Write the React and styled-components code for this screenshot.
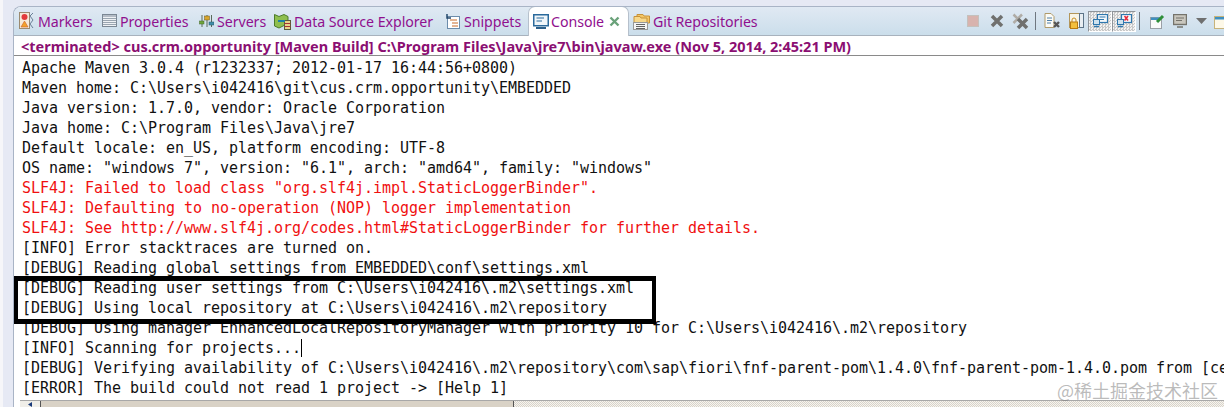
import React from 'react';
import styled, { createGlobalStyle } from 'styled-components';

const GlobalStyle = createGlobalStyle`
    html, body {
        margin: 0;
        padding: 0;
        background: #e6e9f4;
    }
`;

const Page = styled.div`
    width: 1224px;
    height: 407px;
    overflow: hidden;
    position: relative;
    padding: 6px 0 0 10px;
    box-sizing: border-box;
    background: #e6e9f4;
    border-left: 3px solid #f6f6f9;
`;

const Frame = styled.div`
    height: 401px;
    display: flex;
    flex-direction: column;
    background: #fff;
    border-top: 1px solid #a9b4c6;
    border-left: 1px solid #a9b4c6;
    border-top-left-radius: 8px;
    box-sizing: border-box;
    overflow: hidden;
`;

const TabBar = styled.div`
    height: 28px;
    flex-shrink: 0;
    display: flex;
    align-items: stretch;
    padding-left: 4px;
    background: linear-gradient(#e0e9f3, #cbdeeb);
    border-bottom: 1px solid #a8b2bd;
`;

const Tab = styled.div`
    display: flex;
    align-items: center;
    gap: 3px;
    width: ${props => props.w}px;
    padding-left: ${props => props.pad || 1}px;
    flex-shrink: 0;
    box-sizing: border-box;
    font: 14.2px "Noto Sans", sans-serif;
    color: #90108e;
    white-space: nowrap;
    letter-spacing: -0.05px;
    ${props => props.active && `
        background: #fff;
        border: 1px solid #b6c0cc;
        border-bottom: none;
        border-radius: 7px 7px 0 0;
        margin-top: -1px;
        margin-bottom: -1px;
        padding-left: 4px;
        gap: 2px;
        z-index: 1;
    `}
`;

const CloseBox = styled.svg`
    margin-left: 3px;
`;

const Toolbar = styled.div`
    margin-left: auto;
    display: flex;
    align-items: center;
    width: 263px;
    overflow: hidden;
    flex-shrink: 0;
`;

const ToolIcon = styled.span`
    display: flex;
    width: ${props => props.w || 24}px;
    height: 21px;
    align-items: center;
    justify-content: center;
    flex-shrink: 0;
    box-sizing: border-box;
    ${props => props.pressed && `
        background: repeating-conic-gradient(#c8c8c8 0 25%, #f2f2f2 0 50%) 0 0 / 3px 3px;
        border: 1px solid #fff;
        border-top-color: #8f949a;
        border-left-color: #8f949a;
    `}
`;

const Separator = styled.span`
    width: 1px;
    height: 18px;
    background: #6f7780;
    flex-shrink: 0;
    margin: 0 3px;
`;

const ConsoleTitle = styled.div`
    height: 20px;
    flex-shrink: 0;
    box-sizing: border-box;
    padding-left: 7px;
    border-bottom: 1px solid #8a8a8a;
    font: bold 14.5px/20px "Noto Sans", sans-serif;
    color: #8b0f72;
    white-space: nowrap;
`;

const ConsoleBody = styled.div`
    flex: 1;
    min-height: 0;
    padding: 2px 0 0 8px;
    overflow: hidden;
    position: relative;
`;

const Line = styled.div`
    height: 20px;
    font: 15px/20px "DejaVu Sans Mono", monospace;
    letter-spacing: -0.03px;
    color: ${props => (props.err ? '#f01010' : '#111')};
    white-space: pre;
`;

const Caret = styled.span`
    display: inline-block;
    width: 1px;
    height: 18px;
    background: #000;
    vertical-align: -4px;
`;

const Highlight = styled.div`
    position: absolute;
    left: 0;
    top: 220px;
    width: 642px;
    height: 48px;
    border: solid #000;
    border-width: 5px 4px;
    box-sizing: border-box;
`;

const ScrollBar = styled.div`
    height: 7px;
    flex-shrink: 0;
    margin-left: 6px;
    display: flex;
    border-top: 1px solid #a8a8a8;
    box-sizing: border-box;
    background: repeating-conic-gradient(#d9d4ca 0 25%, #f6f4f0 0 50%) 0 0 / 2px 2px;
`;

const ScrollButton = styled.div`
    width: 20px;
    background: #f0eee8;
    border-right: 1px solid #555;
    display: flex;
    justify-content: center;
`;

const ScrollThumb = styled.div`
    width: 472px;
    background: #d9d2c6;
    border-right: 1px solid #555;
`;

const Watermark = styled.div`
    position: absolute;
    right: 6px;
    bottom: 6px;
    font: 18px/22px "Noto Sans CJK SC", sans-serif;
    color: rgba(120, 120, 120, 0.5);
`;

const MarkersIcon = () => (
    <svg width="16" height="18" viewBox="0 0 16 18">
        <rect x="0.5" y="0.5" width="10" height="16" fill="#f6ead8" stroke="#9a8a70" />
        <circle cx="5.5" cy="5" r="3" fill="#e23b3b" />
        <path d="M2 15 L5.5 9 L9 15 Z" fill="#f3a22b" stroke="#c9602b" strokeWidth="0.6" />
        <path d="M14 1 L11 4 L14 8 L11 12 L14 16" fill="none" stroke="#6a7f96" />
    </svg>
);

const PropertiesIcon = () => (
    <svg width="15" height="14" viewBox="0 0 15 14">
        <rect x="0.5" y="0.5" width="14" height="12" fill="#eef1f4" stroke="#7b8794" />
        <rect x="1" y="1" width="13" height="2" fill="#b4bcc6" />
        <path d="M1 4.5H14M1 6.5H14M1 8.5H14M1 10.5H14" stroke="#9aa5b0" />
    </svg>
);

const ServersIcon = () => (
    <svg width="15" height="16" viewBox="0 0 15 16">
        <path d="M3 2V14M8 2V14M12.5 2V14" stroke="#5a6a5a" />
        <rect x="0.5" y="8" width="4.5" height="3" fill="#6fa53a" stroke="#45682a" strokeWidth="0.5" />
        <rect x="5.5" y="3" width="5" height="4" fill="#d8a62e" stroke="#6a5a20" strokeWidth="0.5" />
        <rect x="10" y="9" width="5" height="3" fill="#3f8fa8" stroke="#2a5a6a" strokeWidth="0.5" />
    </svg>
);

const DataSourceIcon = () => (
    <svg width="17" height="17" viewBox="0 0 17 17">
        <path d="M0.5 1.5L5 3.5L10 1.5L14 3.5V14L10 12.5L5 15L0.5 13Z" fill="#8fbf4f" stroke="#4c7a2b" />
        <rect x="10.5" y="7.5" width="6" height="9" fill="#e8d48a" stroke="#5b5b3a" />
        <path d="M10.5 10.5H16.5M10.5 13.5H16.5" stroke="#a33" />
        <path d="M4 8H11" stroke="#1f7fa8" strokeWidth="2" />
    </svg>
);

const SnippetsIcon = () => (
    <svg width="15" height="17" viewBox="0 0 15 17">
        <rect x="1.5" y="3.5" width="12" height="12" fill="#fff" stroke="#6c8cab" />
        <path d="M4 7H11M6 10H12M6 13H12" stroke="#c86a2a" />
        <path d="M1 1V5H5" fill="none" stroke="#23476b" strokeWidth="1.5" />
    </svg>
);

const ConsoleIcon = () => (
    <svg width="16" height="16" viewBox="0 0 16 16">
        <rect x="0.75" y="0.75" width="14.5" height="11" fill="#f0f6fa" stroke="#2b6a9c" strokeWidth="1.5" />
        <path d="M3.5 4H11M3.5 7H9" stroke="#2b6a9c" />
        <path d="M3 14H13" stroke="#2b5f8a" strokeWidth="2" />
    </svg>
);

const GitIcon = () => (
    <svg width="17" height="17" viewBox="0 0 17 17">
        <path d="M4 5V1.5H10L11 3H16.5V10H4Z" fill="#f4c768" stroke="#c7923a" />
        <path d="M1 8V3.5H7L8 5H14V10H1Z" fill="#f7d88b" stroke="#c7923a" />
        <rect x="0.5" y="9.5" width="14" height="7" fill="#f5f5f5" stroke="#999" />
        <path d="M3 11.5H12M3 13.5H12M3 15.5H12" stroke="#555" strokeWidth="0.9" />
    </svg>
);

const StopIcon = () => (
    <svg width="12" height="12" viewBox="0 0 12 12">
        <rect x="0.5" y="0.5" width="11" height="11" fill="#d8b3ae" stroke="#c4c0bc" />
    </svg>
);

const RemoveIcon = () => (
    <svg width="14" height="14" viewBox="0 0 14 14">
        <path d="M2 2L12 12M12 2L2 12" stroke="#70706e" strokeWidth="3.5" />
    </svg>
);

const RemoveAllIcon = () => (
    <svg width="17" height="17" viewBox="0 0 17 17">
        <path d="M1.5 1.5L10 10M10 1.5L1.5 10" stroke="#b0aca6" strokeWidth="2.5" />
        <path d="M6 6L15 15M15 6L6 15" stroke="#70706e" strokeWidth="3.5" />
    </svg>
);

const ClearIcon = () => (
    <svg width="16" height="16" viewBox="0 0 16 16">
        <path d="M1 0.5H7L10 3.5V14.5H1Z" fill="#fbfbf6" stroke="#b09a6a" />
        <path d="M3 5H8M3 7.5H8M3 10H7" stroke="#4f7ea8" />
        <path d="M10 9L15 14M15 9L10 14" stroke="#555" strokeWidth="2.4" />
    </svg>
);

const LockIcon = () => (
    <svg width="15" height="16" viewBox="0 0 15 16">
        <rect x="0.5" y="0.5" width="10" height="14" fill="#f8f4e6" stroke="#b3965a" />
        <rect x="10.5" y="0.5" width="4" height="14" fill="#e9eef2" stroke="#5d7488" />
        <path d="M3 9V7A2 2 0 0 1 7 7V9" fill="none" stroke="#c78f22" />
        <rect x="1.5" y="9" width="7" height="6.5" fill="#f2bf3e" stroke="#b97a12" />
    </svg>
);

const PinIcon = () => (
    <svg width="15" height="14" viewBox="0 0 15 14">
        <rect x="4.5" y="0.5" width="10" height="8" fill="#f4f8fb" stroke="#2f77ad" strokeWidth="1.2" />
        <path d="M6.5 3H12.5M6.5 5.5H11" stroke="#2f77ad" />
        <rect x="0.5" y="5.5" width="6" height="5" fill="#cfe2ee" stroke="#2f77ad" />
        <path d="M1 12.5H6" stroke="#2f77ad" strokeWidth="1.5" />
    </svg>
);

const ErrorConsoleIcon = () => (
    <svg width="15" height="14" viewBox="0 0 15 14">
        <rect x="4.5" y="0.5" width="10" height="8" fill="#f4f8fb" stroke="#2f77ad" strokeWidth="1.2" />
        <path d="M7.5 2L11 6.5M11 2L7.5 6.5" stroke="#ea2a3a" strokeWidth="1.6" />
        <rect x="0.5" y="5.5" width="6" height="5" fill="#cfe2ee" stroke="#2f77ad" />
        <path d="M1 12.5H6" stroke="#2f77ad" strokeWidth="1.5" />
    </svg>
);

const NewPinIcon = () => (
    <svg width="15" height="15" viewBox="0 0 15 15">
        <rect x="0.5" y="3.5" width="11" height="11" fill="#fafafa" stroke="#9aa0a6" />
        <rect x="1" y="3.5" width="10" height="2.5" fill="#3f8fc0" />
        <path d="M7 8L13 2" stroke="#2f8f3a" strokeWidth="3" />
    </svg>
);

const DisplayIcon = () => (
    <svg width="14" height="14" viewBox="0 0 14 14">
        <rect x="0.5" y="0.5" width="13" height="10" fill="#c9c6bd" stroke="#75736c" strokeWidth="1.4" />
        <path d="M3 4H11M3 6.5H9" stroke="#75736c" />
        <path d="M4 13H10" stroke="#75736c" strokeWidth="1.6" />
    </svg>
);

const ArrowIcon = () => (
    <svg width="11" height="6" viewBox="0 0 11 6">
        <path d="M0 0H11L5.5 6Z" fill="#6f6f6f" />
    </svg>
);

const NewConsoleIcon = () => (
    <svg width="15" height="15" viewBox="0 0 15 15">
        <rect x="0.5" y="2.5" width="13" height="12" fill="#fdf8e8" stroke="#c8b37a" />
        <rect x="1" y="3" width="12" height="2.5" fill="#3f8fc0" />
    </svg>
);

const lines = [
    { text: 'Apache Maven 3.0.4 (r1232337; 2012-01-17 16:44:56+0800)' },
    { text: 'Maven home: C:\\Users\\i042416\\git\\cus.crm.opportunity\\EMBEDDED' },
    { text: 'Java version: 1.7.0, vendor: Oracle Corporation' },
    { text: 'Java home: C:\\Program Files\\Java\\jre7' },
    { text: 'Default locale: en_US, platform encoding: UTF-8' },
    { text: 'OS name: "windows 7", version: "6.1", arch: "amd64", family: "windows"' },
    { text: 'SLF4J: Failed to load class "org.slf4j.impl.StaticLoggerBinder".', err: true },
    { text: 'SLF4J: Defaulting to no-operation (NOP) logger implementation', err: true },
    { text: 'SLF4J: See http://www.slf4j.org/codes.html#StaticLoggerBinder for further details.', err: true },
    { text: '[INFO] Error stacktraces are turned on.' },
    { text: '[DEBUG] Reading global settings from EMBEDDED\\conf\\settings.xml' },
    { text: '[DEBUG] Reading user settings from C:\\Users\\i042416\\.m2\\settings.xml' },
    { text: '[DEBUG] Using local repository at C:\\Users\\i042416\\.m2\\repository' },
    { text: '[DEBUG] Using manager EnhancedLocalRepositoryManager with priority 10 for C:\\Users\\i042416\\.m2\\repository' },
    { text: '[INFO] Scanning for projects...', caret: true },
    { text: '[DEBUG] Verifying availability of C:\\Users\\i042416\\.m2\\repository\\com\\sap\\fiori\\fnf-parent-pom\\1.4.0\\fnf-parent-pom-1.4.0.pom from [ce' },
    { text: '[ERROR] The build could not read 1 project -> [Help 1]' },
];

const App = () => {
    return (
        <>
            <GlobalStyle />
            <Page>
                <Frame>
                    <TabBar>
                        <Tab w={83}><MarkersIcon />Markers</Tab>
                        <Tab w={97}><PropertiesIcon />Properties</Tab>
                        <Tab w={75}><ServersIcon />Servers</Tab>
                        <Tab w={172}><DataSourceIcon />Data Source Explorer</Tab>
                        <Tab w={83}><SnippetsIcon />Snippets</Tab>
                        <Tab active w={101}>
                            <ConsoleIcon />Console
                            <CloseBox width="11" height="11" viewBox="0 0 11 11">
                                <path d="M1.5 1.5L9.5 9.5M9.5 1.5L1.5 9.5" stroke="#6aa27a" strokeWidth="2.4" />
                            </CloseBox>
                        </Tab>
                        <Tab w={130} pad={4}><GitIcon />Git Repositories</Tab>
                        <Toolbar>
                            <ToolIcon w={23}><StopIcon /></ToolIcon>
                            <ToolIcon w={25}><RemoveIcon /></ToolIcon>
                            <ToolIcon w={23}><RemoveAllIcon /></ToolIcon>
                            <Separator />
                            <ToolIcon w={26}><ClearIcon /></ToolIcon>
                            <ToolIcon w={23}><LockIcon /></ToolIcon>
                            <ToolIcon pressed><PinIcon /></ToolIcon>
                            <ToolIcon pressed><ErrorConsoleIcon /></ToolIcon>
                            <Separator />
                            <ToolIcon w={28}><NewPinIcon /></ToolIcon>
                            <ToolIcon w={18}><DisplayIcon /></ToolIcon>
                            <ToolIcon w={24}><ArrowIcon /></ToolIcon>
                            <ToolIcon w={17}><NewConsoleIcon /></ToolIcon>
                        </Toolbar>
                    </TabBar>
                    <ConsoleTitle>
                        &lt;terminated&gt; cus.crm.opportunity [Maven Build] C:\Program Files\Java\jre7\bin\javaw.exe (Nov 5, 2014, 2:45:21 PM)
                    </ConsoleTitle>
                    <ConsoleBody>
                        {lines.map((line, i) => (
                            <Line key={i} err={line.err}>
                                {line.text}
                                {line.caret && <Caret />}
                            </Line>
                        ))}
                        <Highlight />
                    </ConsoleBody>
                    <ScrollBar>
                        <ScrollButton>
                            <svg width="6" height="6" viewBox="0 0 6 6">
                                <path d="M5 1L1 3.5L5 6Z" fill="#1a3a7a" />
                            </svg>
                        </ScrollButton>
                        <ScrollThumb />
                    </ScrollBar>
                </Frame>
                <Watermark>@稀土掘金技术社区</Watermark>
            </Page>
        </>
    );
};

export default App;
